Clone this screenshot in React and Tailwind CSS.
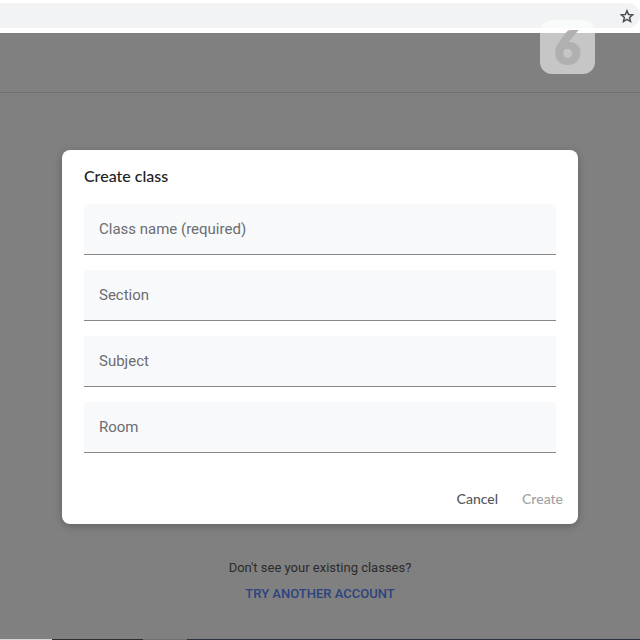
import React, { useState } from 'react';

const FIELDS = [
  { id: 'name', label: 'Class name (required)' },
  { id: 'section', label: 'Section' },
  { id: 'subject', label: 'Subject' },
  { id: 'room', label: 'Room' },
];

function StarIcon() {
  return (
    <svg width="16" height="16" viewBox="0 0 24 24" fill="none" stroke="currentColor" strokeWidth="2.2">
      <path d="M12 4.1l2.4 5.7 6.1.5-4.6 4 1.4 6-5.3-3.2-5.3 3.2 1.4-6-4.6-4 6.1-.5z" />
    </svg>
  );
}

function BrowserBar() {
  return (
    <div className="h-[33px] bg-white pt-[3px]">
      <div className="flex h-[25px] items-center justify-end rounded-r-full bg-[#f1f3f4] pr-[5px]">
        <button type="button" aria-label="Bookmark this tab" className="text-[#4a4d51]">
          <StarIcon />
        </button>
      </div>
    </div>
  );
}

function Watermark() {
  return (
    <div className="absolute right-[45px] top-5 flex h-[54px] w-[55px] items-center justify-center rounded-xl bg-white/55 font-[Lato,sans-serif] text-[45px] font-black leading-none text-[#b0b0b0] [-webkit-text-stroke:2px_#b0b0b0]">
      6
    </div>
  );
}

function Field({ id, label, value, onChange }) {
  return (
    <div className="grid h-[51px] items-center rounded-t-sm border-b border-[#86888a] bg-[#f8f9fb] text-[15px] leading-5">
      <label
        htmlFor={id}
        className={`col-start-1 row-start-1 px-[15px] text-[#6b6d70] ${value ? 'invisible' : ''}`}
      >
        {label}
      </label>
      <input
        id={id}
        type="text"
        value={value}
        onChange={(e) => onChange(id, e.target.value)}
        className="col-start-1 row-start-1 h-full w-full bg-transparent px-[15px] text-[#202124] outline-none"
      />
    </div>
  );
}

function CreateClassDialog() {
  const [values, setValues] = useState({ name: '', section: '', subject: '', room: '' });
  const update = (id, value) => setValues((v) => ({ ...v, [id]: value }));

  return (
    <form
      role="dialog"
      aria-labelledby="dialog-title"
      onSubmit={(e) => e.preventDefault()}
      className="w-full max-w-[516px] rounded-lg bg-white pb-2 pt-[14px] shadow-[0_2px_8px_rgba(0,0,0,0.25)]"
    >
      <h1 id="dialog-title" className="px-[22px] font-[Lato,sans-serif] text-base font-medium leading-6 text-[#202124]">
        Create class
      </h1>
      <div className="mt-4 flex flex-col gap-[15px] px-[22px]">
        {FIELDS.map((f) => (
          <Field key={f.id} id={f.id} label={f.label} value={values[f.id]} onChange={update} />
        ))}
      </div>
      <div className="mt-[29px] flex justify-end gap-2 pr-[7px] font-[Lato,sans-serif] text-sm font-medium">
        <button type="button" className="h-[34px] px-2 text-[#55585c]">Cancel</button>
        <button type="submit" disabled={!values.name} className="h-[34px] px-2 text-[#202124] disabled:text-[#a2a3a4]">
          Create
        </button>
      </div>
    </form>
  );
}

export default function App() {
  return (
    <div className="relative flex min-h-screen flex-col bg-[#808080] font-[Roboto,sans-serif]">
      <BrowserBar />
      <header className="h-[60px] border-b border-[#6f6f6f]" />
      <Watermark />
      <main className="flex grow flex-col items-center px-4 pt-[57px]">
        <CreateClassDialog />
        <p className="mt-[34px] text-[13px] leading-5 text-[#2b2b2b]">Don't see your existing classes?</p>
        <a href="#accounts" className="mt-1.5 text-[13px] font-medium leading-5 text-[#2c437f]">
          TRY ANOTHER ACCOUNT
        </a>
      </main>
      {/* Top edge of the taskbar */}
      <div className="flex h-px">
        <div className="w-[52px] bg-[#d8d4d2]" />
        <div className="w-[91px] bg-[#2a2f31]" />
        <div className="w-[44px] bg-[#6c7274]" />
        <div className="grow bg-[#2c3140]" />
      </div>
    </div>
  );
}
